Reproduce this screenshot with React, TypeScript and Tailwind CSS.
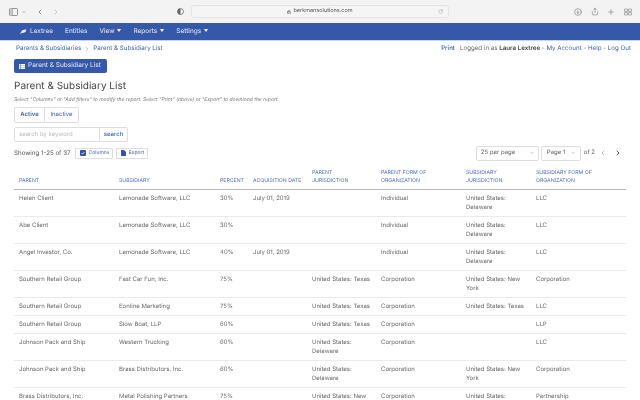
import { ArrowDownCircle, ChevronDown, ChevronLeft, ChevronRight, Lock, Plus, RotateCw, Share } from 'lucide-react';

const columns = [
  { label: 'Parent', width: 'w-[100px]' },
  { label: 'Subsidiary', width: 'w-[101px]' },
  { label: 'Percent', width: 'w-[33px]' },
  { label: 'Acquisition Date', width: 'w-[59px]' },
  { label: 'Parent\nJurisdiction', width: 'w-[69px]' },
  { label: 'Parent Form of Organization', width: 'w-[85px]' },
  { label: 'Subsidiary\nJurisdiction', width: 'w-[70px]' },
  { label: 'Subsidiary Form of Organization', width: 'w-[95px]' },
];

const rows = [
  ['Helen Client', 'Lemonade Software, LLC', '30%', 'July 01, 2019', '', 'Individual', 'United States: Delaware', 'LLC'],
  ['Abe Client', 'Lemonade Software, LLC', '30%', '', '', 'Individual', 'United States: Delaware', 'LLC'],
  ['Angel Investor, Co.', 'Lemonade Software, LLC', '40%', 'July 01, 2019', '', 'Individual', 'United States: Delaware', 'LLC'],
  ['Southern Retail Group', 'Fast Car Fun, Inc.', '75%', '', 'United States: Texas', 'Corporation', 'United States: New York', 'Corporation'],
  ['Southern Retail Group', 'Eonline Marketing', '75%', '', 'United States: Texas', 'Corporation', 'United States: Texas', 'LLC'],
  ['Southern Retail Group', 'Slow Boat, LLP', '60%', '', 'United States: Texas', 'Corporation', '', 'LLP'],
  ['Johnson Pack and Ship', 'Western Trucking', '60%', '', 'United States: Delaware', 'Corporation', '', 'LLC'],
  ['Johnson Pack and Ship', 'Brass Distributors, Inc.', '60%', '', 'United States: Delaware', 'Corporation', 'United States: New York', 'Corporation'],
  ['Brass Distributors, Inc.', 'Metal Polishing Partners', '75%', '', 'United States: New York', 'Corporation', 'United States: Delaware', 'Partnership'],
];

const Caret = () => (
  <span className="inline-block ml-[3px] align-middle border-x-[2.5px] border-t-[3px] border-x-transparent border-t-white" />
);

const BrowserBar = () => (
  <div className="h-[23px] bg-[#f3f3f3] flex items-center text-[#777]">
    <svg className="ml-[9px] w-[9px] h-[8px]" viewBox="0 0 18 16" fill="none" stroke="#777" strokeWidth="1.5">
      <rect x="1" y="1" width="16" height="14" rx="1.5" />
      <path d="M7 1v14" />
      <path d="M2 1h5v14H2z" fill="#ccc" stroke="none" />
    </svg>
    <ChevronDown className="ml-[4px] w-[4px] h-[4px]" strokeWidth={3} />
    <ChevronLeft className="ml-[10px] w-[8px] h-[8px]" strokeWidth={2.5} />
    <ChevronRight className="ml-[8px] w-[8px] h-[8px] text-[#bbb]" strokeWidth={2.5} />
    <svg className="ml-[117px] w-[7px] h-[7px]" viewBox="0 0 14 14">
      <circle cx="7" cy="7" r="6" fill="none" stroke="#666" strokeWidth="1.5" />
      <path d="M7 1a6 6 0 0 0 0 12z" fill="#666" />
    </svg>
    <div className="ml-[7px] w-[258px] h-[13px] rounded-[3px] bg-[#f5f5f5] border border-[#e3e3e3] flex items-center relative">
      <div className="flex-1 flex items-center justify-center gap-[2px] text-[5.5px] leading-none text-[#555]">
        <Lock className="w-[4px] h-[4px]" strokeWidth={3} />
        <span>berkmansolutions.com</span>
      </div>
      <RotateCw className="absolute right-[5px] w-[5px] h-[5px] text-[#999]" />
    </div>
    <ArrowDownCircle className="ml-[125px] w-[8px] h-[8px]" strokeWidth={1.75} />
    <Share className="ml-[9px] w-[8px] h-[9px]" strokeWidth={1.75} />
    <Plus className="ml-[8px] w-[8px] h-[8px]" strokeWidth={1.75} />
    <svg className="ml-[9px] w-[8px] h-[8px]" viewBox="0 0 16 16" fill="none" stroke="#777" strokeWidth="1.2">
      <rect x="1" y="2" width="6" height="5" rx="1" />
      <rect x="9" y="2" width="6" height="5" rx="1" />
      <rect x="1" y="9" width="6" height="5" rx="1" />
      <rect x="9" y="9" width="6" height="5" rx="1" />
    </svg>
  </div>
);

const NavBar = () => (
  <div className="h-[18px] bg-[#3558a8] border-b border-[#c9d3ea] flex items-center pl-[20px] gap-[12px] text-[6.5px] text-[#e6ebf6]">
    <span className="flex items-center gap-[3px]">
      <svg className="w-[7px] h-[6px]" viewBox="0 0 14 12" fill="#e6ebf6">
        <path d="M1 8 4 3c3-2 6-2.500 9-2l-2 5c-3 2-6 2.500-8 2L1 11z" />
      </svg>
      Lextree
    </span>
    <span>Entities</span>
    <span>View<Caret /></span>
    <span>Reports<Caret /></span>
    <span>Settings<Caret /></span>
  </div>
);

const App = () => {
  return (
    <div className="w-[640px] h-[400px] overflow-hidden bg-white font-['Inter',sans-serif] text-[#555] [text-rendering:geometricPrecision] blur-[0.3px]">
      <BrowserBar />
      <NavBar />

      <div className="pl-[14px] pr-[14px]">
        {/* Breadcrumbs and account links */}
        <div className="h-[14px] mt-px -mr-[5px] flex items-center justify-between pl-[2px] text-[6.2px] text-[#3f62ad]">
          <div className="flex items-center">
            <span>Parents &amp; Subsidiaries</span>
            <ChevronRight className="mx-[3px] w-[6px] h-[6px] text-[#777]" />
            <span>Parent &amp; Subsidiary List</span>
          </div>
          <div className="flex items-center">
            <span className="font-medium mr-[5px]">Print</span>
            <span className="text-[#666]">Logged in as <b className="font-semibold text-[#444]">Laura Lextree</b> - </span>
            <span>&nbsp;My Account</span>
            <span className="text-[#666]">&nbsp;-&nbsp;</span>
            <span>Help</span>
            <span className="text-[#666]">&nbsp;-&nbsp;</span>
            <span>Log Out</span>
          </div>
        </div>

        <div className="mt-[3px] w-[93px] h-[14px] rounded-[2px] bg-[#3558a8] text-[#e6ebf6] text-[6.5px] flex items-center pl-[5px] gap-[3px]">
          <svg className="w-[6px] h-[5px]" viewBox="0 0 12 10" fill="#fff">
            <path d="M0 0h3v3H0zM4 0h8v3H4zM0 3.500h3v3H0zM4 3.500h8v3H4zM0 7h3v3H0zM4 7h8v3H4z" />
          </svg>
          Parent &amp; Subsidiary List
        </div>

        <h1 className="mt-[5px] text-[10px] leading-[16px] text-[#444]">Parent &amp; Subsidiary List</h1>
        <p className="mt-[2px] text-[5px] leading-[8px] italic text-[#777]">
          Select "Columns" or "Add filters" to modify the report. Select "Print" (above) or "Export" to download the report.
        </p>

        <div className="mt-[3px] flex text-[6px] leading-none text-[#3f62ad] h-[16px]">
          <div className="w-[31px] border border-[#ddd] rounded-l-[2px] flex items-center justify-center font-semibold">Active</div>
          <div className="w-[34px] border border-l-0 border-[#ddd] rounded-r-[2px] flex items-center justify-center">Inactive</div>
        </div>

        <div className="mt-[4px] flex h-[15px] w-[114px] border border-[#ddd] rounded-[2px] text-[6px] leading-none">
          <div className="w-[85px] border-r border-[#ddd] pl-[4px] flex items-center text-[#bbb]">search by keyword</div>
          <div className="flex-1 flex items-center justify-center font-medium text-[#3f62ad]">search</div>
        </div>

        <div className="mt-[5px] h-[12px] flex items-center text-[#555]">
          <span className="text-[6.2px] mt-px">Showing 1-25 of 37</span>
          <div className="ml-[5px] w-[38px] h-[11px] border border-[#ddd] rounded-[1px] flex items-center justify-center gap-[3px] text-[5px] leading-none text-[#3f62ad]">
            <svg className="w-[6px] h-[6px]" viewBox="0 0 12 12">
              <rect width="12" height="12" rx="2" fill="#2f55a8" />
              <path d="m3 6 2.200 2.200L9 4" stroke="#fff" strokeWidth="1.500" fill="none" />
            </svg>
            Columns
          </div>
          <div className="ml-[3px] w-[32px] h-[11px] border border-[#ddd] rounded-[1px] flex items-center justify-center gap-[3px] text-[5px] leading-none text-[#3f62ad]">
            <svg className="w-[5px] h-[6px]" viewBox="0 0 10 12" fill="#2f55a8">
              <path d="M0 0h6l4 4v8H0z" />
            </svg>
            Export
          </div>

          <div className="ml-auto flex items-center text-[6px] leading-none text-[#666]">
            <div className="w-[63px] h-[15px] border border-[#ddd] rounded-[2px] flex items-center justify-between px-[4px]">
              25 per page
              <ChevronDown className="w-[4px] h-[4px]" strokeWidth={2.5} />
            </div>
            <div className="ml-[2px] w-[40px] h-[15px] border border-[#ddd] rounded-[2px] flex items-center justify-between px-[5px]">
              Page 1
              <ChevronDown className="w-[4px] h-[4px]" strokeWidth={2.5} />
            </div>
            <span className="ml-[3px]">of 2</span>
            <ChevronLeft className="ml-[4px] w-[8px] h-[8px] text-[#bbb]" strokeWidth={3} />
            <ChevronRight className="ml-[7px] mr-[4px] w-[8px] h-[8px] text-[#555]" strokeWidth={3} />
          </div>
        </div>

        <table className="mt-[10px] w-[612px] table-fixed border-collapse text-[6px] leading-[9px]">
          <colgroup>
            {columns.map((col) => (
              <col key={col.label} className={col.width} />
            ))}
          </colgroup>
          <thead>
            <tr className="border-b border-[#bbb]">
              {columns.map((col) => (
                <th key={col.label} className="pl-[5px] pb-[4px] pt-0 pr-[4px] align-bottom text-left text-[5.2px] leading-[8px] font-normal uppercase whitespace-pre-line text-[#4a6cb5]">
                  {col.label}
                </th>
              ))}
            </tr>
          </thead>
          <tbody>
            {rows.map((row, index) => (
              <tr key={index} className="border-b border-[#eaeaea]">
                {row.map((cell, cellIndex) => (
                  <td key={cellIndex} className="pl-[5px] pr-[4px] py-[4px] align-top text-[#666]">
                    {cell}
                  </td>
                ))}
              </tr>
            ))}
          </tbody>
        </table>
      </div>
    </div>
  );
};

export default App;
